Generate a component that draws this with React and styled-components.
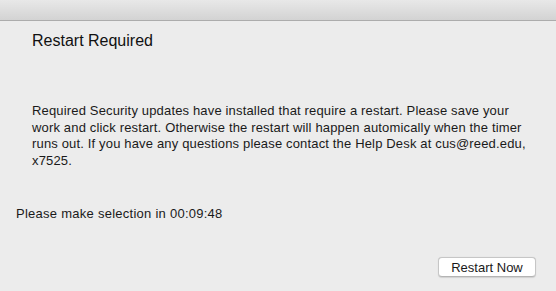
import React from "react"
import styled, { createGlobalStyle } from "styled-components"

const GlobalStyle = createGlobalStyle`
  html, body {
    margin: 0;
    padding: 0;
    background: #ececec;
  }
  body {
    font-family: "Liberation Sans", Arial, Helvetica, sans-serif;
    color: #1a1a1a;
    -webkit-font-smoothing: antialiased;
  }
`

export default () => {
  return (
    <Window>
      <GlobalStyle />
      <TitleBar />
      <Body>
        <Heading>Restart Required</Heading>
        <Message>
          Required Security updates have installed that require a restart. Please save your
          <br />
          work and click restart. Otherwise the restart will happen automically when the timer
          <br />
          runs out. If you have any questions please contact the Help Desk at cus@reed.edu,
          <br />
          x7525.
        </Message>
        <Countdown>Please make selection in 00:09:48</Countdown>
        <Footer>
          <Button>Restart Now</Button>
        </Footer>
      </Body>
    </Window>
  )
}

const Window = styled.div`
  display: flex;
  flex-direction: column;
  width: 556px;
  height: 291px;
  overflow: hidden;
  background: #ececec;
`

const TitleBar = styled.div`
  flex: none;
  height: 20px;
  background: linear-gradient(to bottom, #e8e8e8 0%, #d3d3d3 100%);
  border-bottom: 1px solid #acacac;
`

const Body = styled.div`
  flex: 1;
  display: flex;
  flex-direction: column;
  padding: 10px 20px 14px 16px;
`

const Heading = styled.h1`
  margin: 0 0 0 16px;
  font-size: 16px;
  font-weight: 400;
  line-height: 20px;
  color: #111;
`

const Message = styled.p`
  margin: 52px 0 0 16px;
  font-size: 13px;
  line-height: 16.7px;
  letter-spacing: 0.16px;
  white-space: nowrap;
`

const Countdown = styled.div`
  margin-top: 36px;
  font-size: 13px;
  line-height: 16px;
  letter-spacing: 0.26px;
`

const Footer = styled.div`
  margin-top: auto;
  display: flex;
  justify-content: flex-end;
`

const Button = styled.button`
  width: 98px;
  height: 20px;
  padding: 0;
  font-family: inherit;
  font-size: 13px;
  color: #1a1a1a;
  background: #fff;
  border: 1px solid #c6c6c6;
  border-bottom-color: #b4b4b4;
  border-radius: 4px;
  box-shadow: 0 0.5px 1px rgba(0, 0, 0, 0.12);
  cursor: pointer;
`
